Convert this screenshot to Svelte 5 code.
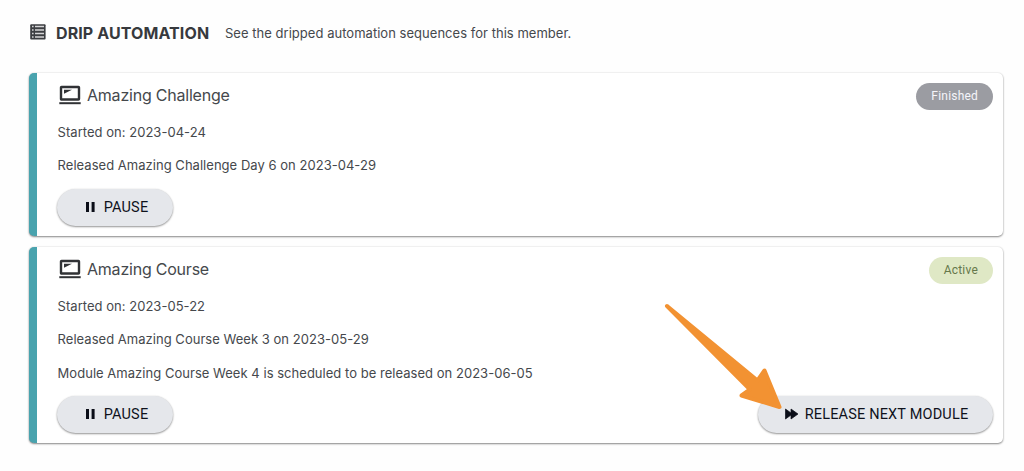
<script>
	const sequences = [
		{
			name: 'Amazing Challenge',
			status: 'Finished',
			lines: ['Started on: 2023-04-24', 'Released Amazing Challenge Day 6 on 2023-04-29'],
			canRelease: false
		},
		{
			name: 'Amazing Course',
			status: 'Active',
			lines: [
				'Started on: 2023-05-22',
				'Released Amazing Course Week 3 on 2023-05-29',
				'Module Amazing Course Week 4 is scheduled to be released on 2023-06-05'
			],
			canRelease: true
		}
	];
</script>

<main>
	<header>
		<svg class="list-icon" width="16" height="16" viewBox="0 0 16 16">
			<rect x="0.2" y="0.2" width="15.4" height="15.4" rx="1" fill="#3c3e42" />
			<path d="M2 2.5h1.6M5 2.5h9M2 6h1.6M5 6h9M2 9.5h1.6M5 9.5h9M2 13h1.6M5 13h9" stroke="#d6d6d8" stroke-width="1.5" />
		</svg>
		<h1>DRIP AUTOMATION</h1>
		<p>See the dripped automation sequences for this member.</p>
	</header>

	<div class="sequences">
		{#each sequences as sequence}
			<section class="card">
				<div class="card-head">
					<svg width="22" height="20" viewBox="0 0 22 20">
						<rect x="2" y="2" width="18" height="12.5" rx="0.5" fill="none" stroke="#303235" stroke-width="2.4" />
						<path d="M5 4.8h8L5 8.8z" fill="#303235" />
						<path d="M.3 18.2h21.4" stroke="#303235" stroke-width="2" />
					</svg>
					<h2>{sequence.name}</h2>
					<span class="badge" class:active={sequence.status === 'Active'}>{sequence.status}</span>
				</div>
				{#each sequence.lines as line}
					<p class="line">{line}</p>
				{/each}
				<div class="actions">
					<button class="pause">
						<svg width="10" height="12" viewBox="0 0 10 12">
							<path d="M0 1h3v10H0zM5.6 1h3v10h-3z" fill="#0b0e18" />
						</svg>
						<span>PAUSE</span>
					</button>
					{#if sequence.canRelease}
						<button class="release">
							<svg width="14" height="12" viewBox="0 0 14 12">
								<path d="M.5 1L6 5V1l7 5L6 11V7L.5 11z" fill="#0b0e18" stroke="#0b0e18" stroke-width="0.7" />
							</svg>
							<span>RELEASE NEXT MODULE</span>
						</button>
					{/if}
				</div>
			</section>
		{/each}
	</div>

	<svg class="arrow" width="124" height="112" viewBox="0 0 124 112">
		<path
			d="M4 4L94.5 78.5L101.5 68.5L116.5 105L78.5 93.5L87 87.5Z"
			fill="#f29232"
			stroke="#f29232"
			stroke-width="4"
			stroke-linejoin="round"
		/>
	</svg>
</main>

<style>
	:global(body) {
		background: #fefefe;
	}

	main {
		position: relative;
		box-sizing: border-box;
		height: 471px;
		padding: 21px 21px 0 29px;
		overflow: hidden;
		font-family: Inter, sans-serif;
		color: #45484c;
	}

	header {
		display: flex;
		align-items: center;
		height: 24px;
	}

	.list-icon {
		margin: -3px 10px 0 1px;
	}

	h1,
	h2,
	p {
		margin: 0;
	}

	h1 {
		width: 169px;
		font-size: 16px;
		font-weight: 700;
		letter-spacing: 0.1px;
		line-height: 24px;
		color: #37393d;
		white-space: nowrap;
	}

	p {
		font-size: 13px;
		letter-spacing: 0.03px;
		white-space: nowrap;
	}

	.sequences {
		display: grid;
		gap: 11px;
		margin-top: 28px;
	}

	.card {
		box-sizing: border-box;
		padding: 10px 10px 10px 20px;
		border-left: 8px solid #49a3ae;
		border-radius: 5px;
		background: #fff;
		box-shadow: 0 1px 2px rgba(0, 0, 0, 0.45), 0 0 2px rgba(0, 0, 0, 0.12);
	}

	.card-head {
		display: flex;
		align-items: center;
		height: 27px;
		margin-bottom: 6px;
	}

	.card-head svg {
		margin: -3px 6px 0 2px;
	}

	h2 {
		margin-top: -3px;
		font-size: 16px;
		font-weight: 400;
		letter-spacing: -0.22px;
		line-height: 24px;
	}

	.badge {
		box-sizing: border-box;
		height: 27px;
		margin-left: auto;
		padding: 0 15px;
		border-radius: 14px;
		background: #9b9ca2;
		color: #f5f5fa;
		font-family: Roboto, sans-serif;
		font-size: 12px;
		letter-spacing: 0.2px;
		line-height: 26px;
	}

	.badge.active {
		background: #dfe8c5;
		color: #66784b;
	}

	.line {
		height: 33.4px;
		padding-left: 0.6px;
		line-height: 33.8px;
	}

	.actions {
		display: flex;
		justify-content: space-between;
		margin-top: 6px;
	}

	button {
		display: flex;
		align-items: center;
		justify-content: center;
		box-sizing: border-box;
		height: 37px;
		padding: 0 0 1px;
		border: 0;
		border-radius: 19px;
		background: #e5e7eb;
		box-shadow: 0 1px 2px rgba(0, 0, 0, 0.4), 0 0 2px rgba(0, 0, 0, 0.08);
		color: #0f121c;
		font-family: Roboto, sans-serif;
		font-size: 14.5px;
		letter-spacing: 0.17px;
		line-height: 18px;
		white-space: nowrap;
		cursor: pointer;
	}

	button span {
		padding-top: 2px;
	}

	.pause {
		width: 116px;
		padding-left: 4px;
		gap: 8px;
	}

	.release {
		width: 235px;
		padding-left: 2px;
		gap: 6px;
	}

	.arrow {
		position: absolute;
		top: 302px;
		left: 663px;
		pointer-events: none;
	}
</style>
